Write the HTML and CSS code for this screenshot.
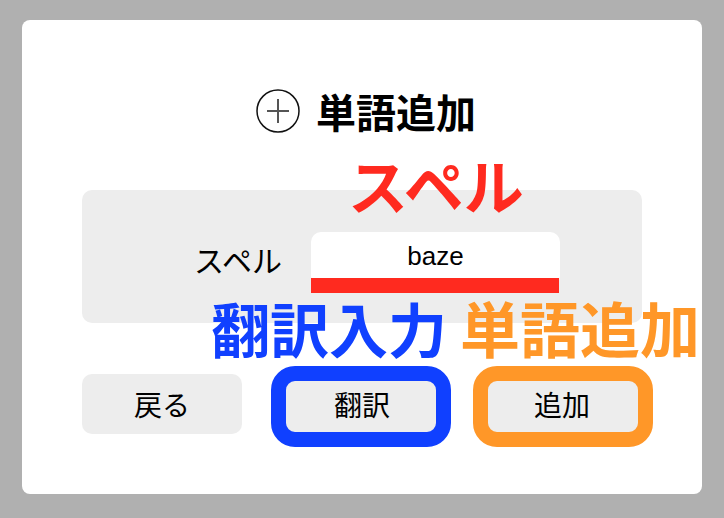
FILE: index.html
```html
<!DOCTYPE html>
<html lang="ja">
<head>
<meta charset="utf-8">
<title>単語追加</title>
<link rel="stylesheet" href="styles.css">
</head>
<body>
<div class="card">
  <div class="title-row">
    <svg class="plus-icon" width="44" height="44" viewBox="0 0 44 44" aria-hidden="true">
      <circle cx="22" cy="22" r="21" fill="none" stroke="#111" stroke-width="1.5"/>
      <line x1="11" y1="22" x2="33" y2="22" stroke="#555" stroke-width="2"/>
      <line x1="22" y1="10" x2="22" y2="34" stroke="#555" stroke-width="2"/>
    </svg>
    <h1 class="title">単語追加</h1>
  </div>

  <div class="panel">
    <label class="field-label" for="spell">スペル</label>
    <div class="input-wrap">
      <input id="spell" class="spell-input" type="text" value="baze" readonly>
      <div class="red-bar"></div>
    </div>
  </div>

  <div class="btn-row">
    <button class="btn">戻る</button>
    <button class="btn">翻訳<span class="mark mark-blue"></span></button>
    <button class="btn">追加<span class="mark mark-orange"></span></button>
  </div>

  <div class="note note-red">スペル</div>
  <div class="note note-pair"><span class="blue">翻訳入力</span><span class="orange">単語追加</span></div>
</div>
</body>
</html>
```

FILE: styles.css
```css
html, body {
  margin: 0;
  padding: 0;
}

body {
  background: #b0b0b0;
  font-family: "Liberation Sans", "Noto Sans CJK JP", sans-serif;
  color: #000;
  width: 724px;
  height: 518px;
  overflow: hidden;
}

.card {
  position: relative;
  margin: 20px 0 0 22px;
  width: 680px;
  height: 474px;
  box-sizing: border-box;
  background: #fff;
  border-radius: 8px;
  padding: 69px 60px 0 60px;
  display: flex;
  flex-direction: column;
}

.title-row {
  display: flex;
  align-items: center;
  justify-content: center;
  gap: 16px;
  height: 44px;
  padding-left: 8px;
}

.plus-icon {
  display: block;
  flex: none;
}

.title {
  margin: 0;
  font-family: "Noto Sans CJK JP", sans-serif;
  font-size: 40px;
  font-weight: 700;
  line-height: 44px;
}

.panel {
  margin-top: 57px;
  height: 133px;
  background: #ededed;
  border-radius: 10px;
  display: flex;
  align-items: center;
  justify-content: center;
  gap: 29px;
  padding-left: 30px;
  padding-top: 4px;
  box-sizing: border-box;
}

.field-label {
  font-family: "Noto Sans CJK JP", sans-serif;
  font-size: 30px;
  line-height: 1;
}

.input-wrap {
  position: relative;
  width: 249px;
  height: 54px;
}

.spell-input {
  display: block;
  width: 100%;
  height: 100%;
  box-sizing: border-box;
  border: none;
  outline: none;
  border-radius: 10px;
  background: #fff;
  padding: 0 0 4px 0;
  text-align: center;
  font-family: "Liberation Sans", sans-serif;
  font-size: 26px;
  color: #000;
}

.red-bar {
  position: absolute;
  left: 0;
  top: 46px;
  width: 248px;
  height: 15px;
  background: #ff2a1f;
}

.btn-row {
  margin-top: 51px;
  display: flex;
  justify-content: space-between;
}

.btn {
  position: relative;
  width: 160px;
  height: 60px;
  border: none;
  border-radius: 10px;
  background: #ededed;
  font-family: "Noto Sans CJK JP", sans-serif;
  font-size: 28px;
  color: #000;
  padding: 0;
  line-height: 1;
}

.mark {
  position: absolute;
  border: 15px solid;
  border-radius: 24px;
  pointer-events: none;
}

.mark-blue {
  border-color: #1040ff;
  top: -8px;
  bottom: -13px;
  left: -11px;
  right: -9px;
}

.mark-orange {
  border-color: #ff9728;
  top: -8px;
  bottom: -13px;
  left: -9px;
  right: -11px;
}

.note {
  position: absolute;
  font-family: "Noto Sans CJK JP", sans-serif;
  font-weight: 700;
  line-height: 1;
  white-space: nowrap;
}

.note-red {
  left: 326px;
  top: 134px;
  font-size: 60px;
  color: #ff2a1f;
}

.note-pair {
  left: 189px;
  top: 277px;
  font-size: 59px;
}

.blue {
  color: #1040ff;
}

.orange {
  color: #ff9728;
  font-size: 60px;
  margin-left: 13px;
}
```
